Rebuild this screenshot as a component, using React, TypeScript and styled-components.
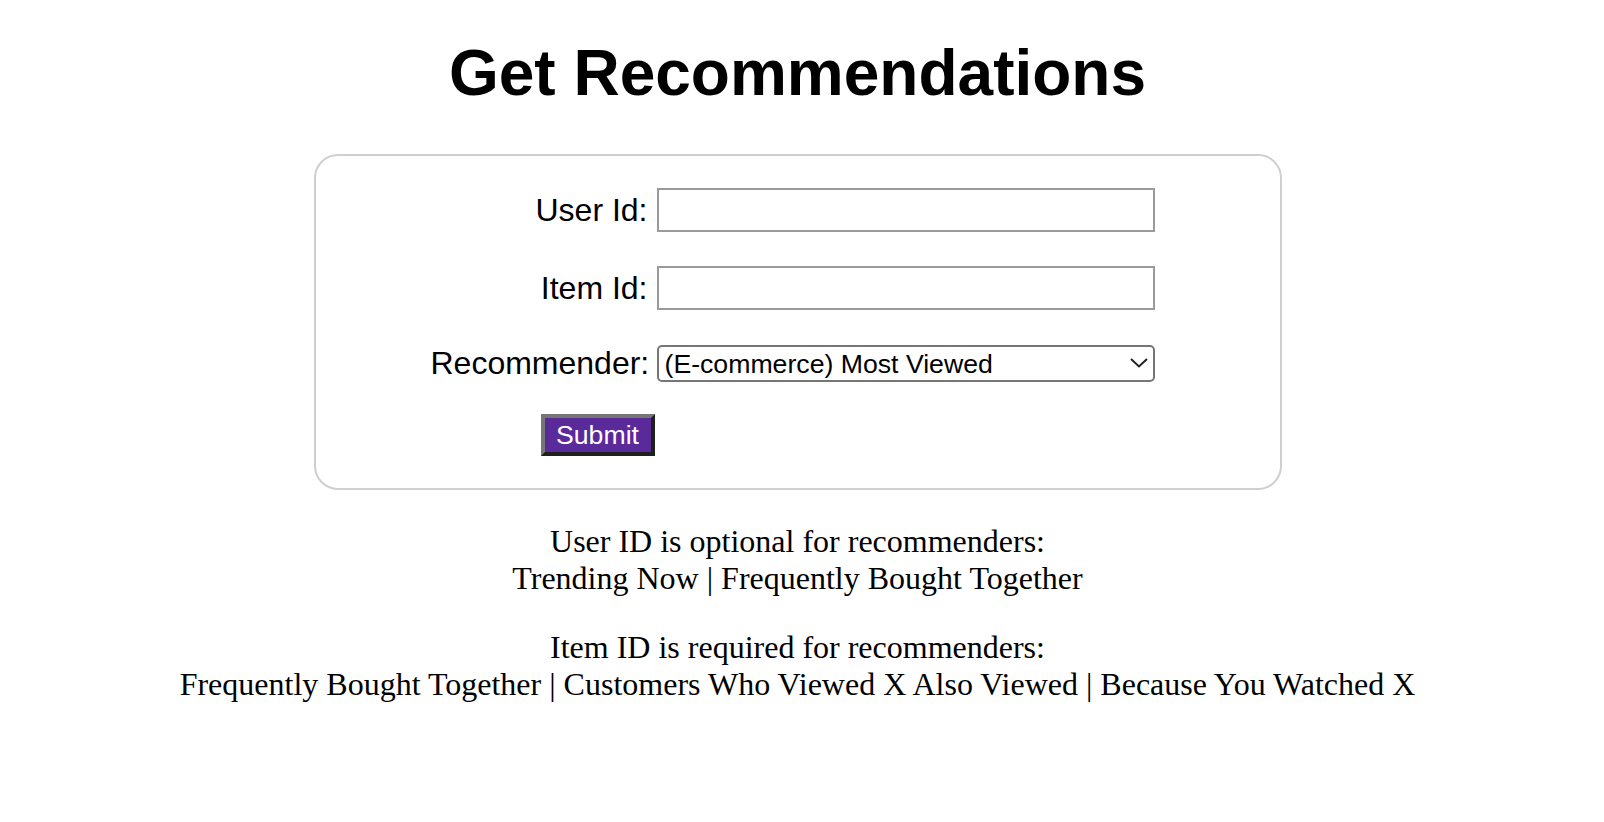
import { useState } from "react";
import styled, { createGlobalStyle } from "styled-components";

const GlobalStyle = createGlobalStyle`
  html, body {
    margin: 0;
    padding: 0;
    background: #fff;
  }
  body {
    margin-right: 9px;
    font-family: "Liberation Serif", "Times New Roman", serif;
    color: #000;
  }
`;

const Page = styled.div`
  display: flex;
  flex-direction: column;
  align-items: center;
`;

const Title = styled.h1`
  margin: 41px 0 49px;
  font-family: "Liberation Sans", Arial, Helvetica, sans-serif;
  font-size: 64px;
  font-weight: 700;
  line-height: 64px;
  text-align: center;
`;

const Card = styled.form`
  box-sizing: border-box;
  width: 968px;
  border: 2px solid #cfcfcf;
  border-radius: 24px;
  padding: 32px 0 32px 115px;
  display: flex;
  flex-direction: column;
`;

const Row = styled.div<{ $top?: number }>`
  display: grid;
  grid-template-columns: 224px 498px;
  column-gap: 2px;
  align-items: center;
  margin-top: ${(p) => p.$top ?? 0}px;
`;

const Label = styled.label`
  font-family: "Liberation Sans", Arial, Helvetica, sans-serif;
  font-size: 32px;
  text-align: right;
  padding-right: 7px;
  white-space: nowrap;
`;

const TextInput = styled.input`
  box-sizing: border-box;
  width: 498px;
  height: 44px;
  margin: 0;
  border: 2px solid #9a9a9a;
  background: #fff;
  padding: 2px 6px;
  font-family: "Liberation Sans", Arial, sans-serif;
  font-size: 26.67px;
  outline: none;
`;

const SelectWrap = styled.div`
  position: relative;
  width: 498px;
  height: 37px;
`;

const Select = styled.select`
  box-sizing: border-box;
  width: 100%;
  height: 100%;
  margin: 0;
  appearance: none;
  border: 2px solid #767676;
  border-radius: 5px;
  background: #fff;
  padding: 0 36px 0 6px;
  font-family: "Liberation Sans", Arial, sans-serif;
  font-size: 26.67px;
  color: #000;
  outline: none;
`;

const Chevron = styled.svg`
  position: absolute;
  right: 7px;
  top: 13px;
  pointer-events: none;
`;

const SubmitButton = styled.button`
  justify-self: end;
  box-sizing: border-box;
  width: 114px;
  height: 42px;
  margin: 0;
  padding: 0;
  border-style: solid;
  border-width: 4px;
  border-color: #767676 #1f1f1f #1f1f1f #767676;
  background: #5a2a9b;
  color: #fff;
  font-family: "Liberation Sans", Arial, sans-serif;
  font-size: 26.67px;
  line-height: 1;
  cursor: pointer;
`;

const Notes = styled.div`
  margin-top: 33px;
  text-align: center;
  font-size: 32px;
`;

const Note = styled.p`
  margin: 0 0 32px;
`;

const recommenders = [
  "(E-commerce) Most Viewed",
  "(E-commerce) Trending Now",
  "(E-commerce) Frequently Bought Together",
  "(E-commerce) Customers Who Viewed X Also Viewed",
  "(Media) Because You Watched X",
];

export default function App() {
  const [userId, setUserId] = useState("");
  const [itemId, setItemId] = useState("");
  const [recommender, setRecommender] = useState(recommenders[0]);

  return (
    <Page>
      <GlobalStyle />
      <Title>Get Recommendations</Title>
      <Card onSubmit={(e) => e.preventDefault()}>
        <Row>
          <Label htmlFor="userId">User Id:</Label>
          <TextInput id="userId" value={userId} onChange={(e) => setUserId(e.target.value)} />
        </Row>
        <Row $top={34}>
          <Label htmlFor="itemId">Item Id:</Label>
          <TextInput id="itemId" value={itemId} onChange={(e) => setItemId(e.target.value)} />
        </Row>
        <Row $top={35}>
          <Label htmlFor="recommender">Recommender:</Label>
          <SelectWrap>
            <Select id="recommender" value={recommender} onChange={(e) => setRecommender(e.target.value)}>
              {recommenders.map((r) => (
                <option key={r} value={r}>
                  {r}
                </option>
              ))}
            </Select>
            <Chevron width="18" height="10" viewBox="0 0 18 10">
              <polyline points="1,1 9,8.5 17,1" fill="none" stroke="#222" strokeWidth="2" />
            </Chevron>
          </SelectWrap>
        </Row>
        <Row $top={32}>
          <SubmitButton type="submit">Submit</SubmitButton>
        </Row>
      </Card>
      <Notes>
        <Note>
          User ID is optional for recommenders:
          <br />
          Trending Now | Frequently Bought Together
        </Note>
        <Note>
          Item ID is required for recommenders:
          <br />
          Frequently Bought Together | Customers Who Viewed X Also Viewed | Because You Watched X
        </Note>
      </Notes>
    </Page>
  );
}
